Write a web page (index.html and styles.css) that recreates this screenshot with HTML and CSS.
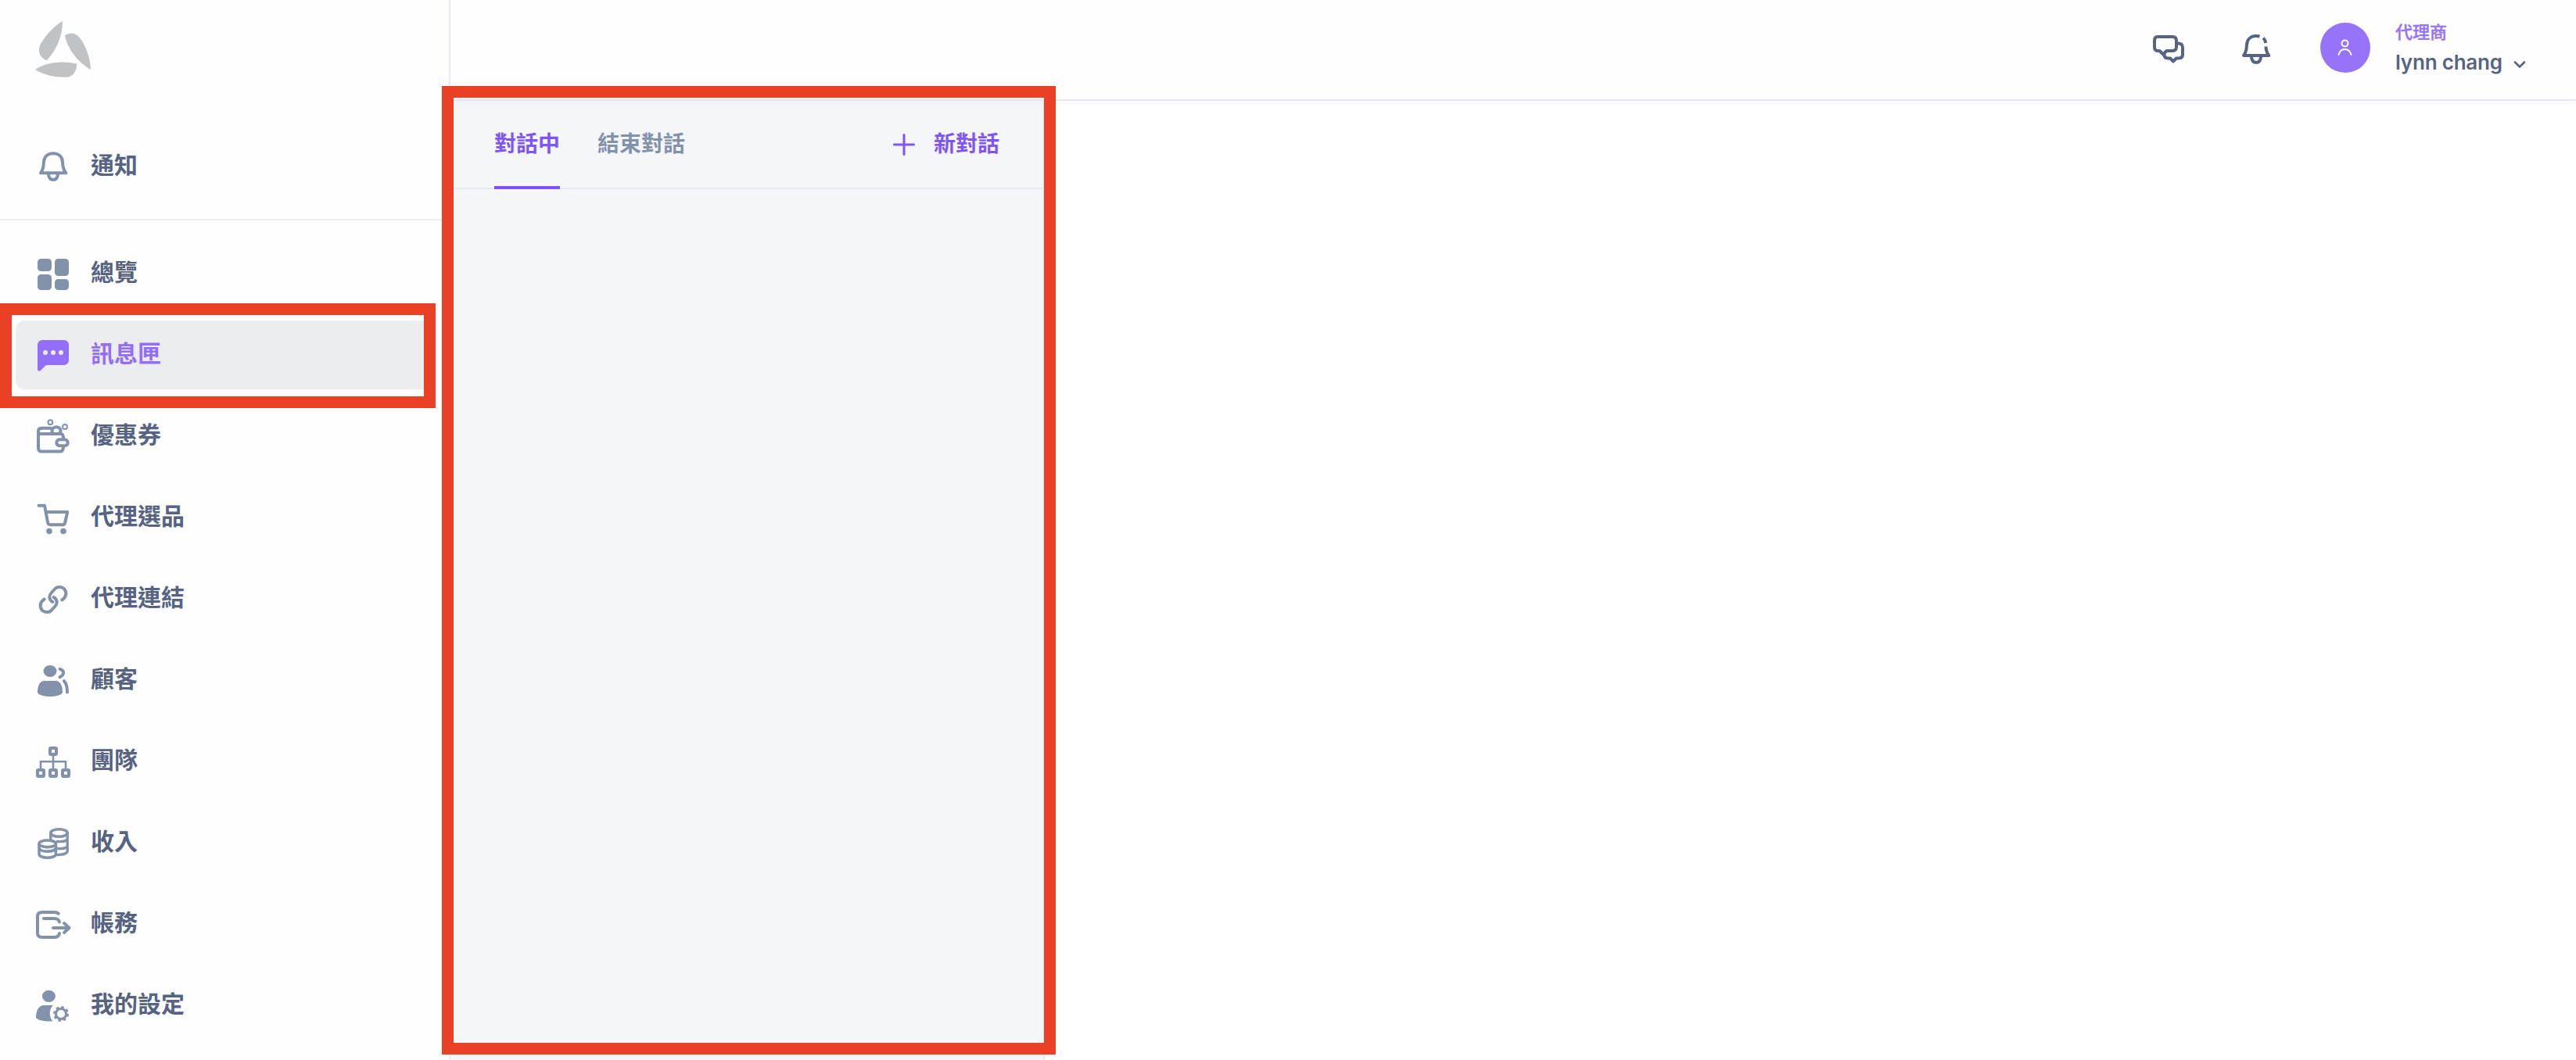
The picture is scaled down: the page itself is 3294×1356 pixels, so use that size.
FILE: index.html
```
<!DOCTYPE html>
<html lang="zh-Hant">
<head>
    <meta charset="UTF-8">
    <meta name="viewport" content="width=device-width, initial-scale=1.0">
    <title>訊息匣</title>
    <link rel="stylesheet" href="styles.css">
</head>
<body>
    <aside class="sidebar">
        <div class="logo">
            <svg width="72" height="72" viewBox="0 0 72 72">
                <path d="M36 0C23 8 15 18 9 27.500C3.500 36 5 46 15.700 50.300C28 37 36 20 36 0Z"/>
                <path d="M39 18.500C44 15 52 14 58 21.500C65 30 72 48 72 62C56 53 42 35 39 18.500Z"/>
                <path d="M.8 62C16 51.500 38 50.500 54.300 54.700C54 62 51 70 43 71.500C30 72.500 14 70 .8 62Z"/>
            </svg>
        </div>
        <div class="notice">
            <a class="item">
                <svg class="icon" viewBox="0 0 48 48">
                    <path d="M8 34.300C12 29 11.700 25 12 20C12.500 12.500 18 9.200 24 9.200S35.500 12.500 36 20C36.300 25 36 29 40.300 34.300Z"/>
                    <path d="M18 36C18.500 41 21 43 24 43S29.500 41 30 36"/>
                </svg>
                <span>通知</span>
            </a>
        </div>
        <nav class="menu">
            <a class="item">
                <svg class="icon solid" viewBox="0 0 48 48">
                    <rect x="4" y="5" width="18" height="16" rx="4.500"/>
                    <rect x="26" y="5" width="18" height="22" rx="4.500"/>
                    <rect x="4" y="25" width="18" height="20" rx="4.500"/>
                    <rect x="26" y="31" width="18" height="14" rx="4.500"/>
                </svg>
                <span>總覽</span>
            </a>
            <a class="item active">
                <svg class="icon solid" viewBox="0 0 48 48">
                    <path d="M10 5H38a6 6 0 0 1 6 6V31a6 6 0 0 1-6 6H15L7.500 44.200Q4 46 4 42V11a6 6 0 0 1 6-6Z"/>
                    <g class="dots">
                        <circle cx="14" cy="21" r="3"/>
                        <circle cx="24" cy="21" r="3"/>
                        <circle cx="34" cy="21" r="3"/>
                    </g>
                </svg>
                <span>訊息匣</span>
            </a>
            <a class="item">
                <svg class="icon" viewBox="0 0 48 48">
                    <circle cx="20.300" cy="6.200" r="2.900" stroke-width="2"/>
                    <circle cx="39" cy="12" r="2.900" stroke-width="2"/>
                    <path d="M23 20C19.500 9.500 36.500 9.500 33 20"/>
                    <path d="M21 13.800H9.500Q5 13.800 5 17.500V39Q5 43.600 9.500 43.600H33Q36.500 43.600 37 38M5 21H33.500Q37 21 37 27"/>
                    <rect x="28.300" y="28.300" width="14.400" height="8" rx="4"/>
                </svg>
                <span>優惠券</span>
            </a>
            <a class="item">
                <svg class="icon" viewBox="0 0 48 48">
                    <path d="M5.500 8.700H13L17 30Q17.500 33.200 20 33.200H36.500Q38.600 33.200 39.200 30.500L42.200 17H15"/>
                    <g class="fill">
                        <circle cx="19" cy="41.500" r="3.800"/>
                        <circle cx="37" cy="41.500" r="3.800"/>
                    </g>
                </svg>
                <span>代理選品</span>
            </a>
            <a class="item">
                <svg class="icon" viewBox="0 0 48 48">
                    <path d="M35.300 25.500C41 22 42 15 37.500 10.800C34 8 28.500 8.300 26 11.500L21.500 16.500C18 20.500 19 25.500 23.300 28"/>
                    <path d="M12.700 24.500C7 28 6 35 10.500 39.200C14 42 19.500 41.700 22 38.500L26.500 33.500C30 29.500 29 24.500 24.700 22"/>
                </svg>
                <span>代理連結</span>
            </a>
            <a class="item">
                <svg class="icon" viewBox="0 0 48 48">
                    <g class="fill">
                        <ellipse cx="20" cy="12.500" rx="8.500" ry="7.500"/>
                        <path d="M12 25H28C34 26 36 32 36 40C34 43.500 28 45 20 45S6 43.500 4 40C4 32 6 26 12 25Z"/>
                    </g>
                    <path d="M32.500 9.800C38.500 11.500 39 17 32.500 20.200M37.800 25.200C41.500 29 42 33 42 39.500"/>
                </svg>
                <span>顧客</span>
            </a>
            <a class="item">
                <svg class="icon" viewBox="0 0 48 48">
                    <path d="M24 16V34M8 34V24.300H40V34" stroke-width="2.600"/>
                    <rect x="20" y="7" width="8" height="8" rx="1"/>
                    <rect x="4" y="35" width="8" height="8" rx="1"/>
                    <rect x="20" y="35" width="8" height="8" rx="1"/>
                    <rect x="36" y="35" width="8" height="8" rx="1"/>
                </svg>
                <span>團隊</span>
            </a>
            <a class="item">
                <svg class="icon" viewBox="0 0 48 48">
                    <ellipse cx="31.500" cy="11.500" rx="10.700" ry="4.700" stroke-width="3.600"/>
                    <path d="M20.800 12V20M42.200 12V34.500C42 38 36 39.700 29 39.600M29 22.500C35 23 41 22 42.200 19.500M29 31.500C35 32 41 31 42.200 28.500" stroke-width="3.400"/>
                    <ellipse cx="16.700" cy="25.300" rx="10.700" ry="4.300" stroke-width="3.600"/>
                    <path d="M6 26V38.500C6 44.800 27.400 44.800 27.400 38.500V26M6 31C8 36.500 25 36.500 27.400 31" stroke-width="3.600"/>
                </svg>
                <span>收入</span>
            </a>
            <a class="item">
                <svg class="icon" viewBox="0 0 48 48">
                    <path d="M30.800 10.700Q29 9 26 9H10Q4 9 4 14V36Q4 41 10 41H25.500Q31 41 32 36"/>
                    <path d="M12 17H25Q31 17 32 21.500M24 29H44M38 23L44.500 29L38 35"/>
                </svg>
                <span>帳務</span>
            </a>
            <a class="item">
                <svg class="icon" viewBox="0 0 48 48">
                    <g class="fill">
                        <ellipse cx="18.400" cy="12.400" rx="8.500" ry="7.700"/>
                        <path d="M12 24H24C18.500 29 18.500 39 23.500 44.500C15 45 6 44 2 40C2 32 5 24 12 24Z"/>
                    </g>
                    <circle cx="34" cy="35" r="6.600" stroke-width="3.200"/>
                    <circle class="teeth" cx="34" cy="35" r="8.700"/>
                </svg>
                <span>我的設定</span>
            </a>
        </nav>
    </aside>

    <div class="page">
        <header class="topbar">
            <svg class="icon" viewBox="0 0 48 48">
                <path d="M10 10H29Q34 10 34 15V23Q34 28 29 28H21.500L17 32.500L12.500 28H10Q6 28 6 23V15Q6 10 10 10Z"/>
                <path d="M35.500 18.500Q42 18 42 24V32.500Q42 37.500 37 37.500H34L30 41.500L26 37.500H23Q18.500 37.500 18.500 32.500"/>
            </svg>
            <svg class="icon bell" viewBox="0 0 48 48">
                <path class="cut" d="M28.500 9.500Q26.500 9 24 9C18 9 12.500 12.500 12 20C11.700 25 12 29 8 34H40.300C37.500 30.500 36.700 27 36.300 22.500M33.200 11.500Q35.500 14 36.300 18"/>
                <path d="M18 36C18.500 41 21 43 24 43S29.500 41 30 36"/>
            </svg>
            <div class="avatar">
                <svg width="20" height="24" viewBox="0 0 20 24">
                    <circle cx="9.500" cy="6.500" r="4"/>
                    <path d="M1.500 21C4 11.500 15 11.500 17.500 21"/>
                </svg>
            </div>
            <div class="user">
                <div class="role">代理商</div>
                <div class="name">lynn chang</div>
            </div>
            <svg class="chevron" width="16" height="12" viewBox="0 0 16 12">
                <path d="M2 2.500L8 8.500L14 2.500"/>
            </svg>
        </header>
        <main class="content">
            <section class="chats">
                <div class="tabs">
                    <a class="tab current">對話中</a>
                    <a class="tab">結束對話</a>
                    <a class="new-chat">
                        <svg width="28" height="28" viewBox="0 0 28 28">
                            <path d="M14 1.500V26.500M1.500 14H26.500"/>
                        </svg>
                        <span>新對話</span>
                    </a>
                </div>
            </section>
        </main>
    </div>

    <div class="mark mark-menu"></div>
    <div class="mark mark-chats"></div>
</body>
</html>
```
FILE: styles.css
```
* { box-sizing: border-box; }
body { margin: 0; height: 1356px; display: flex; position: relative; overflow: hidden; background-color: #fff; color: #566383; font-family: Inter, "Noto Sans CJK TC", sans-serif; }

/* sidebar */
.sidebar { width: 576px; flex: none; border-right: 2px solid #ecedf3; background-color: #fefefe; }
.logo { height: 167px; padding: 27px 0 0 44px; }
.logo svg { display: block; fill: #bfc3c6; }
.notice { height: 115px; padding: 0 20px; border-bottom: 2px solid #ecedf3; }
.menu { display: flex; flex-direction: column; gap: 16px; padding: 24px 20px 0; }
.item { display: flex; align-items: center; gap: 24px; height: 88px; padding-left: 24px; border-radius: 12px; font-size: 30px; font-weight: 700; line-height: 44px; }
.menu span { margin-top: -4px; }
.item.active { background-color: #ecedf1; color: #926ef9; }

.icon { width: 48px; height: 48px; flex: none; fill: none; stroke: #8392ab; stroke-width: 4; stroke-linecap: round; stroke-linejoin: round; }
.icon.solid, .icon .fill { fill: #8392ab; stroke: none; }
.active .icon.solid { fill: #926ef9; }
.dots { fill: #ecedf1; }
.teeth { stroke-width: 2.6; stroke-linecap: butt; stroke-dasharray: 3.5 3.333; }

/* top bar */
.page { flex: 1; display: flex; flex-direction: column; }
.topbar { position: relative; height: 129px; display: flex; align-items: center; justify-content: flex-end; padding: 0 64px 5px 0; background-color: #fefefe; border-bottom: 2px solid #e5e8f2; box-shadow: 0 3px 6px rgba(80, 90, 120, 0.04); }
.topbar .icon { stroke: #566383; margin-right: 64px; }
.topbar .bell { margin-right: 58px; }
.bell .cut { stroke-linecap: butt; }
.avatar { width: 64px; height: 64px; border-radius: 50%; background-color: #9773f9; display: flex; align-items: center; justify-content: center; }
.avatar svg { fill: none; stroke: #fff; stroke-width: 2; stroke-linecap: round; }
.user { width: 151px; margin-left: 32px; white-space: nowrap; }
.role { color: #9773f9; font-size: 22px; font-weight: 500; line-height: 32px; -webkit-text-stroke: 0.4px; }
.name { font-size: 26px; font-weight: 600; line-height: 36px; letter-spacing: -0.2px; margin-top: 5px; }
.chevron { fill: none; stroke: #566383; stroke-width: 2.6; stroke-linecap: round; stroke-linejoin: round; margin-top: 44px; }

/* chat list */
.content { flex: 1; display: flex; }
.chats { width: 760px; border-right: 2px solid #e6e8f0; background-color: #f4f6fa; }
.tabs { display: flex; height: 113px; padding: 0 56px; border-bottom: 2px solid #e6e8f1; font-size: 28px; font-weight: 700; line-height: 40px; }
.tab { height: 113px; padding-top: 35px; margin-right: 48px; color: #8392ab; }
.tab.current { color: #7e55f8; border-bottom: 4px solid #7e55f8; }
.new-chat { display: flex; gap: 24px; height: 40px; margin: 35px 0 0 auto; color: #7e55f8; }
.new-chat svg { margin-top: 7px; fill: none; stroke: #7e55f8; stroke-width: 3; stroke-linecap: round; }

/* red frames over the page */
.mark { position: absolute; border: 15px solid #ea4026; }
.mark-menu { left: 0; top: 388px; width: 557px; height: 134px; }
.mark-chats { left: 565px; top: 110px; width: 785px; height: 1239px; }
```
